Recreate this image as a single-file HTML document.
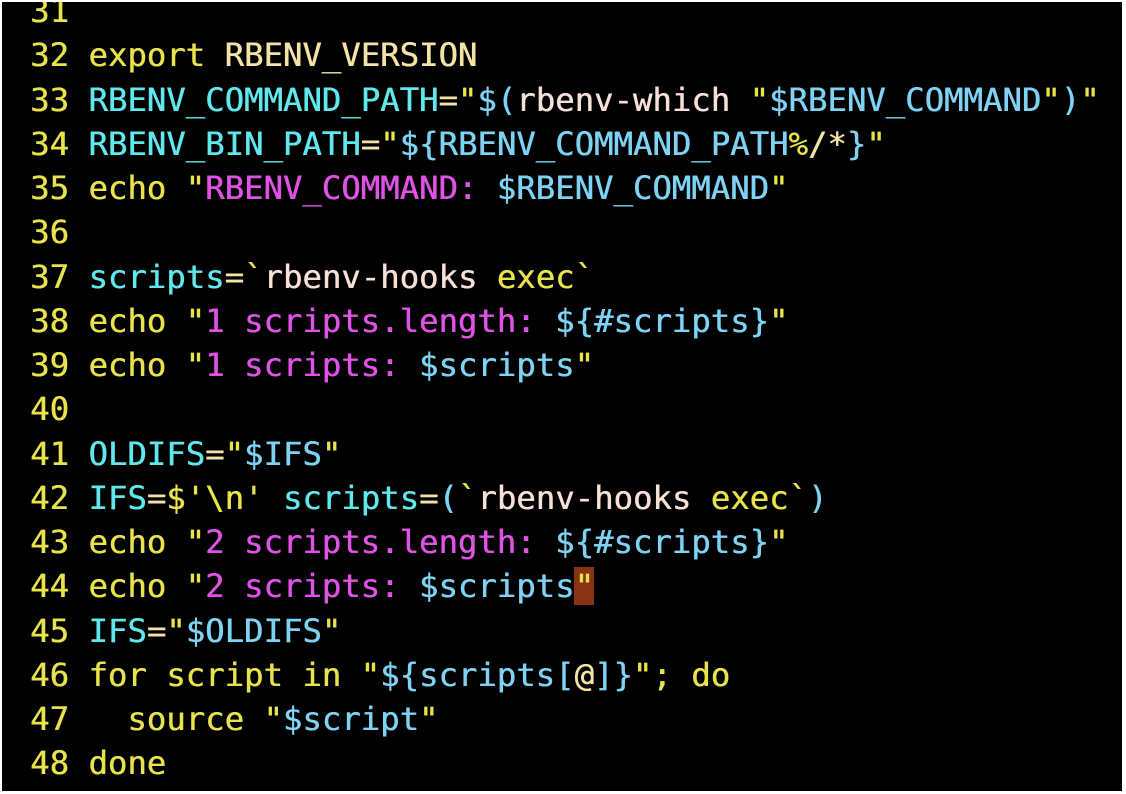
<!DOCTYPE html>
<html><head><meta charset="utf-8"><style>
html,body{margin:0;padding:0;background:#fff;width:1126px;height:794px;overflow:hidden}
#t{position:absolute;left:2px;top:2px;width:1120px;height:789px;background:#000;overflow:hidden}
pre{position:absolute;left:28px;top:-13px;margin:0;font-family:"DejaVu Sans Mono","Liberation Mono",monospace;font-size:32.3px;line-height:44.25px;color:#e8e34a;white-space:pre;text-shadow:0.5px 0 0 currentColor}
.y{color:#e8e34a}.c{color:#5fe8ee}.b{color:#7ed3f5}.m{color:#e052e6}.w{color:#f8e0d6}.l{color:#f3e3a6}
.cur{background:#8a3214}
</style></head><body><div id="t"><pre>31
32 export <span class="l">RBENV_VERSION</span>
33 <span class="c">RBENV_COMMAND_PATH</span><span class="l">=</span>"<span class="b">$(</span><span class="w">rbenv-which</span> "<span class="b">$RBENV_COMMAND</span>"<span class="b">)</span>"
34 <span class="c">RBENV_BIN_PATH</span><span class="l">=</span>"<span class="b">${RBENV_COMMAND_PATH</span>%<span class="l">/*</span><span class="b">}</span>"
35 echo "<span class="m">RBENV_COMMAND: </span><span class="b">$RBENV_COMMAND</span>"
36
37 <span class="c">scripts</span><span class="l">=</span>`<span class="w">rbenv-hooks</span> exec`
38 echo "<span class="m">1 scripts.length: </span><span class="b">${#scripts}</span>"
39 echo "<span class="m">1 scripts: </span><span class="b">$scripts</span>"
40
41 <span class="c">OLDIFS</span><span class="l">=</span>"<span class="b">$IFS</span>"
42 <span class="c">IFS</span><span class="l">=</span>$'\n' <span class="c">scripts</span><span class="l">=</span><span class="b">(</span>`<span class="w">rbenv-hooks</span> exec`<span class="b">)</span>
43 echo "<span class="m">2 scripts.length: </span><span class="b">${#scripts}</span>"
44 echo "<span class="m">2 scripts: </span><span class="b">$scripts</span><span class="cur">"</span>
45 <span class="c">IFS</span><span class="l">=</span>"<span class="b">$OLDIFS</span>"
46 for script in "<span class="b">${scripts[</span><span class="l">@</span><span class="b">]}</span>"; do
47   source "<span class="b">$script</span>"
48 done
49</pre></div></body></html>
